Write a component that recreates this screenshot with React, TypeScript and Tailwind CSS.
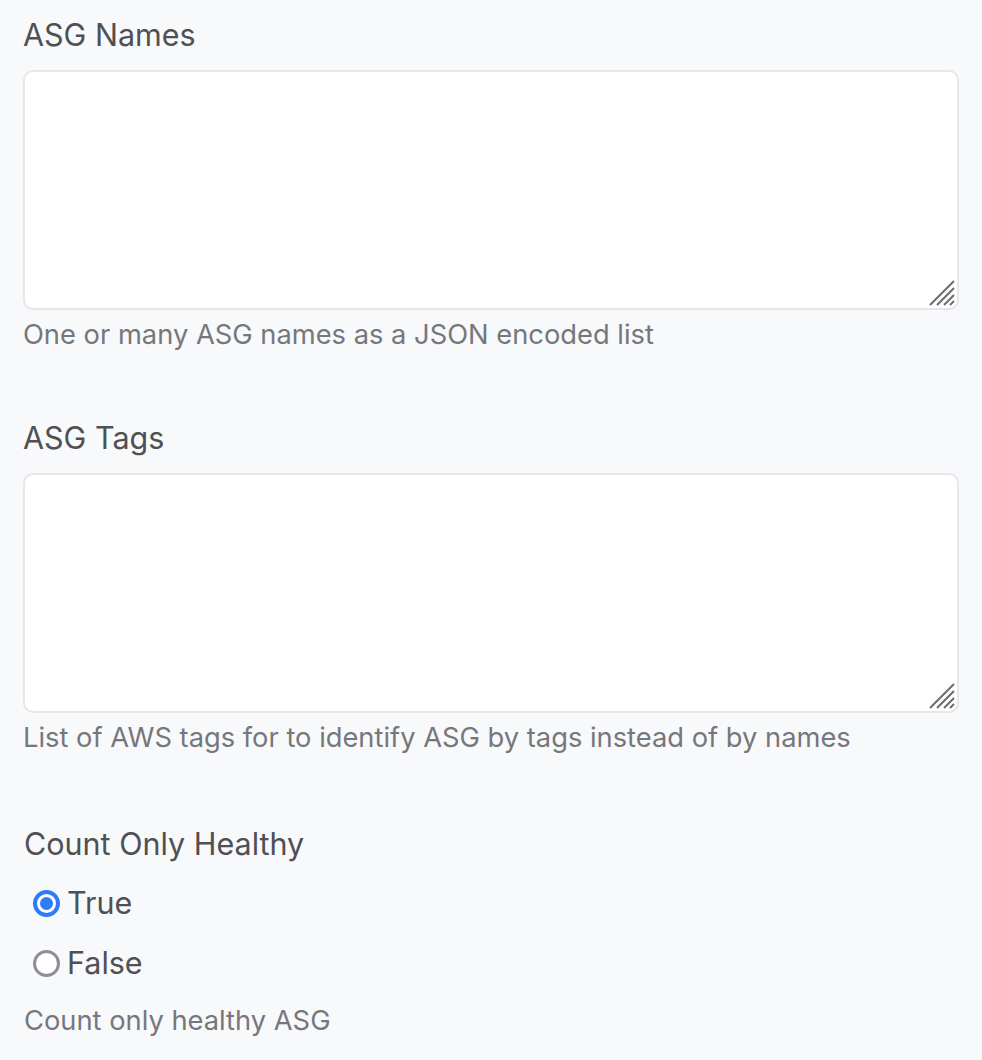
import { useState } from "react"

const font = { fontFamily: 'Inter, "Noto Sans", Arial, sans-serif' }

function Grip() {
  return (
    <svg className="absolute right-[4px] bottom-[4px] pointer-events-none" width="26" height="26" viewBox="0 0 26 26">
      <g stroke="#6b6b6f" strokeWidth="2">
        <line x1="1" y1="25" x2="25" y2="1" />
        <line x1="8" y1="25" x2="25" y2="8" />
        <line x1="15" y1="25" x2="25" y2="15" />
        <line x1="21" y1="25" x2="25" y2="21" />
      </g>
    </svg>
  )
}

function TextareaField({ label, help }: { label: string; help: string }) {
  return (
    <div className="flex flex-col">
      <label className="text-[30.5px] leading-[36px] text-[#4f5054] mb-[17px]">{label}</label>
      <div className="relative w-[936px] h-[240px]">
        <textarea className="w-full h-full resize-none bg-white border-2 border-[#e6e7ea] rounded-[10px] outline-none p-3" />
        <Grip />
      </div>
      <p className="mt-[8px] text-[27.3px] leading-[34px] text-[#76777b]">{help}</p>
    </div>
  )
}

export default function App() {
  const [healthy, setHealthy] = useState("true")

  const options = [
    { value: "true", label: "True" },
    { value: "false", label: "False" },
  ]

  return (
    <div className="min-h-[1060px] bg-[#f8f9fb] pl-[23px] pt-[17px]" style={font}>
      <div className="flex flex-col gap-[68px]">
        <TextareaField label="ASG Names" help="One or many ASG names as a JSON encoded list" />
        <TextareaField label="ASG Tags" help="List of AWS tags for to identify ASG by tags instead of by names" />
        <div className="flex flex-col mt-[3px]">
          <label className="text-[30.5px] leading-[36px] text-[#4f5054] pl-px">Count Only Healthy</label>
          <div className="mt-[21px] flex flex-col gap-[20px] pl-[10px]">
            {options.map((o) => (
              <label key={o.value} className="flex items-center h-[40px] cursor-pointer">
                <span
                  onClick={() => setHealthy(o.value)}
                  className={`w-[27px] h-[27px] rounded-full flex items-center justify-center bg-white ${
                    healthy === o.value ? "border-[4px] border-[#2f7cf6]" : "border-[3px] border-[#8e8e94]"
                  }`}
                >
                  {healthy === o.value && <span className="w-[13px] h-[13px] rounded-full bg-[#2f7cf6]" />}
                </span>
                <span className="ml-[7px] text-[30.5px] leading-[40px] text-[#4f5054]">{o.label}</span>
              </label>
            ))}
          </div>
          <p className="mt-[21px] text-[27.3px] leading-[34px] text-[#76777b] pl-px">Count only healthy ASG</p>
        </div>
      </div>
    </div>
  )
}
